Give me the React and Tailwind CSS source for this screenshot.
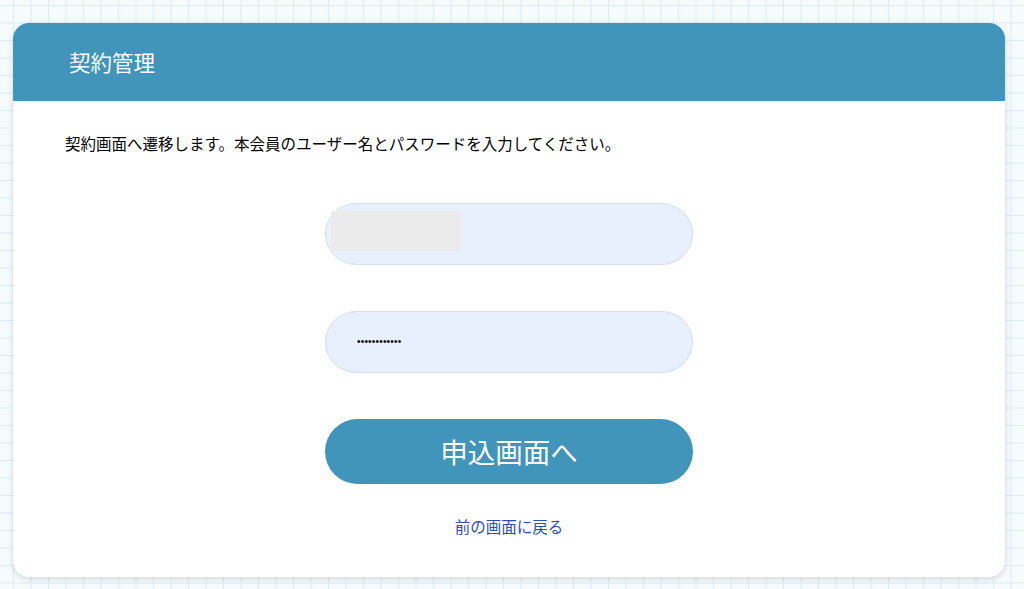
import React from 'react'

/**
 * 契約管理 — login-before-contract screen on a graph-paper background.
 */
const jp = { fontFamily: '"Noto Sans CJK JP", "Liberation Sans", sans-serif' }

export default function App() {
  return (
    <div
      className="w-[1024px] h-[589px] overflow-hidden bg-[#f6fbfe] pt-[23px] pl-[13px]"
      style={{
        ...jp,
        backgroundImage:
          'linear-gradient(to right, #dcebf5 1px, transparent 1px), linear-gradient(to bottom, #dcebf5 1px, transparent 1px)',
        backgroundSize: '17.5px 17.5px',
        backgroundPosition: '13px 5px',
      }}
    >
      <div className="w-[992px] h-[554px] bg-white rounded-[16px] overflow-hidden shadow-[0_2px_6px_rgba(0,0,0,0.15)] flex flex-col">
        <div className="h-[78px] bg-[#4194ba] flex items-center pl-[56px]">
          <h1 className="text-white text-[21.5px] leading-none">契約管理</h1>
        </div>

        <div className="flex flex-col">
          <p className="text-[15.5px] text-black pl-[52px] pt-[31px] leading-[22px]">
            契約画面へ遷移します。本会員のユーザー名とパスワードを入力してください。
          </p>

          <div className="flex flex-col items-center pt-[49px]">
            <div className="w-[368px] h-[62px] rounded-full bg-[#e8f0fe] border border-[#d8dee8] flex items-start pl-[5px] pt-[7px]">
              <div className="w-[129px] h-[40px] bg-[#ebebeb]" />
            </div>

            <div className="w-[368px] h-[62px] mt-[46px] rounded-full bg-[#e8f0fe] border border-[#d8dee8] flex items-center pl-[31px]">
              <span className="text-[10px] text-black leading-none tracking-[0.2px]" style={{ fontFamily: '"Liberation Sans", sans-serif' }}>
                ••••••••••••
              </span>
            </div>

            <button className="w-[368px] h-[65px] mt-[46px] rounded-full bg-[#4194ba] text-white text-[27.5px] flex items-center justify-center">
              申込画面へ
            </button>

            <a className="mt-[31px] text-[15.5px] text-[#2d4fb3] leading-[22px]">前の画面に戻る</a>
          </div>
        </div>
      </div>
    </div>
  )
}
